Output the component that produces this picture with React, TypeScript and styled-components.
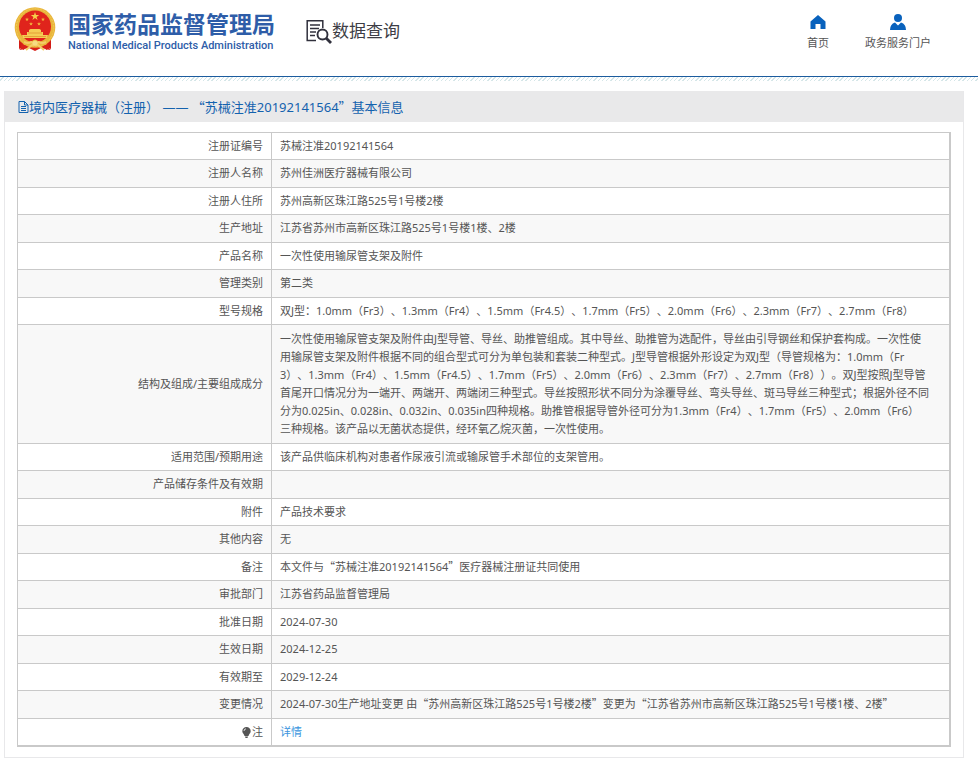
import React from "react";
import styled, { createGlobalStyle } from "styled-components";

const GlobalStyle = createGlobalStyle`
  *, *::before, *::after { box-sizing: border-box; }
  body {
    margin: 0;
    background: #fff;
    color: #555;
    font-family: "Noto Sans", "Noto Sans CJK SC", sans-serif;
    font-size: 11px;
    line-height: 18px;
    text-spacing-trim: space-all;
  }
`;

const Header = styled.header`
  display: flex;
  align-items: flex-start;
  justify-content: space-between;
  height: 77px;
  padding: 7px 47px 0 14px;
  border-bottom: 1px solid #1c5c9e;
`;

const Hatch = styled.div`
  height: 4px;
  background: repeating-linear-gradient(135deg, #fff 0 2px, #d5e6e8 2px 3px);
`;

const Brand = styled.div`
  display: flex;
  align-items: flex-start;
`;

const HomeLink = styled.a`
  display: flex;
  gap: 12px;
  color: #2e5da8;
  text-decoration: none;
`;

const BrandText = styled.span`
  display: flex;
  flex-direction: column;
  white-space: nowrap;
`;

const BrandName = styled.span`
  font-family: "Noto Sans CJK SC", sans-serif;
  font-size: 23px;
  font-weight: 700;
  line-height: 32px;
`;

const BrandEnglish = styled.span`
  font-family: Roboto, sans-serif;
  font-size: 11px;
  font-weight: 500;
  line-height: 14px;
`;

const Section = styled.h1`
  display: flex;
  align-items: flex-start;
  margin: 12px 0 0 31px;
  color: #3d3d45;
  font-family: "Noto Sans CJK SC", sans-serif;
  font-size: 17px;
  font-weight: 400;
  line-height: 22px;
  white-space: nowrap;
`;

const Nav = styled.nav`
  display: flex;
  gap: 36px;
  padding-top: 7px;
`;

const NavLink = styled.a`
  display: flex;
  flex-direction: column;
  align-items: center;
  gap: 4px;
  color: #555;
  text-decoration: none;
  white-space: nowrap;
`;

const Panel = styled.main`
  margin: 10px 14px 6px 4px;
  border: 1px solid #e8e8ea;
  border-top: 0;
`;

const PanelTitle = styled.h2`
  display: flex;
  align-items: center;
  height: 31px;
  margin: 0 0 10px;
  padding-left: 13px;
  background: #e9e9ea;
  color: #1462ae;
  font-size: 13px;
  font-weight: 400;
`;

const TableWrap = styled.div`
  padding: 0 12px 10px;
`;

const Table = styled.table`
  width: 100%;
  table-layout: fixed;
  border-collapse: separate;
  border-spacing: 0;
  border: 1px solid #c9c9c9;
  border-right-width: 2px;
`;

const Label = styled.th`
  width: 254px;
  padding: 4px 8px;
  border-right: 1px solid #c9c9c9;
  border-bottom: 1px solid #c9c9c9;
  font-weight: 400;
  text-align: right;
`;

const Value = styled.td<{ $long?: boolean }>`
  padding: ${(p) => (p.$long ? "5px 8px" : "4px 8px")};
  border-bottom: 1px solid #c9c9c9;
  white-space: ${(p) => (p.$long ? "pre-line" : "normal")};
`;

const Row = styled.tr`
  &:nth-child(even) {
    background: #f8f8f8;
  }
  &:nth-child(even) > * {
    padding-bottom: 5px;
  }
`;

const FullWidth = styled.span`
  font-family: "Noto Sans CJK SC", sans-serif;
  line-height: 1;
`;

const DetailLink = styled.a`
  color: #3a95de;
  text-decoration: none;
`;

const BulbIcon = styled.svg`
  vertical-align: -2px;
  margin-right: 1px;
`;

const Emblem = () => (
  <svg width="42" height="45" viewBox="0 0 42 45" aria-hidden="true">
    <path d="M5 31L8 33 12 37 10 43 6 41 5 43ZM37 31L34 33 30 37 32 43 36 41 37 43Z" fill="#d21b16" />
    <path d="M8 35H34L36 43 27 41 21 44 15 41 6 43Z" fill="#d9211a" />
    <circle cx="21" cy="20.500" r="20.300" fill="#e9b63b" />
    <circle cx="21" cy="20.500" r="18.700" fill="none" stroke="#f2c958" strokeWidth="1" strokeDasharray="2 1" />
    <circle cx="21" cy="19.500" r="16" fill="#e0241c" />
    <path d="M21 5l1 3h3.200l-2.600 2 1 3-2.600-1.900L18.400 13l1-3-2.600-2H20z" fill="#f6cf4a" />
    <path d="M13 10.500l.5 1.300h1.400l-1.100.9.400 1.300-1.200-.8-1.200.8.400-1.300-1.100-.9h1.400zM29 10.500l.5 1.300h1.400l-1.100.9.400 1.300-1.200-.8-1.200.8.400-1.300-1.100-.9h1.400zM17 15l.5 1.300h1.400l-1.100.9.400 1.300-1.200-.8-1.200.8.400-1.300-1.100-.9h1.400zM25 15l.5 1.300h1.400l-1.100.9.400 1.300-1.200-.8-1.200.8.400-1.300-1.100-.9h1.400z" fill="#f2b83e" />
    <path d="M15 23L16.500 22H25.500L27 23V25H29V28H34L33 31H9L8 28H13V25H15Z" fill="#f5cd55" />
    <path d="M14 26H28M10 29.500H32" stroke="#df8c2c" strokeWidth=".7" />
    <path d="M7 32Q13 36 18 34Q21 31 24 34Q29 36 35 32L32 38Q27 38 24 36H18Q15 38 10 38Z" fill="#e9b63b" />
    <path d="M10 35Q14 37 17 35L21 37 25 35Q28 37 32 35M12 43L18 38H24L30 43" fill="none" stroke="#f3cd68" strokeWidth="2" />
    <circle cx="21" cy="36" r="2.500" fill="#f7dc83" />
  </svg>
);

const SearchDocIcon = () => (
  <svg width="26" height="26" viewBox="0 0 26 26" fill="none" stroke="#30303c" aria-hidden="true">
    <path d="M10 21.500H1.200V1.800H16.800V9" strokeWidth="1.500" />
    <path d="M4 6H14M4 9.500H13M4 13H10M4 16.500H9" strokeWidth="1.300" />
    <circle cx="16.500" cy="15.500" r="5" strokeWidth="1.900" />
    <path d="M20 19L25 24" strokeWidth="2.800" />
  </svg>
);

const HomeIcon = () => (
  <svg width="16" height="16" viewBox="0 0 16 16" fill="#0962bd" aria-hidden="true">
    <path d="M8 1L15.500 7.500V15H10.500V10H5.500V15H.5V7.500Z" />
  </svg>
);

const UserIcon = () => (
  <svg width="16" height="16" viewBox="0 0 16 16" fill="#0962bd" aria-hidden="true">
    <circle cx="8" cy="4" r="4" />
    <path d="M5 8.500L8 11.500 11 8.500Q16 10 16 16H0Q0 10 5 8.500Z" />
  </svg>
);

const DocIcon = () => (
  <svg width="11" height="12" viewBox="0 0 11 12" fill="none" stroke="#1462ae" aria-hidden="true">
    <path d="M1 .5H6.500L10 4V11.500H1ZM6.500 .5V4H10M3 5.500H8M3 7.500H8M3 9.500H8" />
  </svg>
);

const Bulb = () => (
  <BulbIcon width="9" height="11" viewBox="0 0 9 11" aria-hidden="true">
    <path d="M4.500 0A4.200 4.200 0 0 1 8.700 4.200C8.700 6.300 6.500 7.300 6.500 9H2.500C2.500 7.300.3 6.300.3 4.200A4.200 4.200 0 0 1 4.500 0ZM3 9.500H6L5.500 11H3.500Z" fill="#555" />
    <path d="M2 4Q2 2 4 1.800" fill="none" stroke="#fff" strokeWidth=".8" />
  </BulbIcon>
);

// Curly quotes take the full-width forms of the Chinese font.
const ChineseText = ({ text }: { text: string }) => (
  <>
    {text.split(/([“”])/).map((part, i) =>
      i % 2 ? <FullWidth key={i}>{part}</FullWidth> : part
    )}
  </>
);

const structure = `一次性使用输尿管支架及附件由J型导管、导丝、助推管组成。其中导丝、助推管为选配件，导丝由引导钢丝和保护套构成。一次性使
用输尿管支架及附件根据不同的组合型式可分为单包装和套装二种型式。J型导管根据外形设定为双J型（导管规格为：1.0mm（Fr
3）、1.3mm（Fr4）、1.5mm（Fr4.5）、1.7mm（Fr5）、2.0mm（Fr6）、2.3mm（Fr7）、2.7mm（Fr8））。双J型按照J型导管
首尾开口情况分为一端开、两端开、两端闭三种型式。导丝按照形状不同分为涂覆导丝、弯头导丝、斑马导丝三种型式；根据外径不同
分为0.025in、0.028in、0.032in、0.035in四种规格。助推管根据导管外径可分为1.3mm（Fr4）、1.7mm（Fr5）、2.0mm（Fr6）
三种规格。该产品以无菌状态提供，经环氧乙烷灭菌，一次性使用。`;

const records: { label: string; value: string; long?: boolean }[] = [
  { label: "注册证编号", value: "苏械注准20192141564" },
  { label: "注册人名称", value: "苏州佳洲医疗器械有限公司" },
  { label: "注册人住所", value: "苏州高新区珠江路525号1号楼2楼" },
  { label: "生产地址", value: "江苏省苏州市高新区珠江路525号1号楼1楼、2楼" },
  { label: "产品名称", value: "一次性使用输尿管支架及附件" },
  { label: "管理类别", value: "第二类" },
  { label: "型号规格", value: "双J型：1.0mm（Fr3）、1.3mm（Fr4）、1.5mm（Fr4.5）、1.7mm（Fr5）、2.0mm（Fr6）、2.3mm（Fr7）、2.7mm（Fr8）" },
  { label: "结构及组成/主要组成成分", value: structure, long: true },
  { label: "适用范围/预期用途", value: "该产品供临床机构对患者作尿液引流或输尿管手术部位的支架管用。" },
  { label: "产品储存条件及有效期", value: "" },
  { label: "附件", value: "产品技术要求" },
  { label: "其他内容", value: "无" },
  { label: "备注", value: "本文件与“苏械注准20192141564”医疗器械注册证共同使用" },
  { label: "审批部门", value: "江苏省药品监督管理局" },
  { label: "批准日期", value: "2024-07-30" },
  { label: "生效日期", value: "2024-12-25" },
  { label: "有效期至", value: "2029-12-24" },
  { label: "变更情况", value: "2024-07-30生产地址变更 由“苏州高新区珠江路525号1号楼2楼”变更为“江苏省苏州市高新区珠江路525号1号楼1楼、2楼”" },
];

export default function App() {
  return (
    <>
      <GlobalStyle />
      <Header>
        <Brand>
          <HomeLink href="#">
            <Emblem />
            <BrandText>
              <BrandName>国家药品监督管理局</BrandName>
              <BrandEnglish>National Medical Products Administration</BrandEnglish>
            </BrandText>
          </HomeLink>
          <Section>
            <SearchDocIcon />
            数据查询
          </Section>
        </Brand>
        <Nav>
          <NavLink href="#">
            <HomeIcon />
            首页
          </NavLink>
          <NavLink href="#">
            <UserIcon />
            政务服务门户
          </NavLink>
        </Nav>
      </Header>
      <Hatch />
      <Panel>
        <PanelTitle>
          <DocIcon />
          <span>
            <ChineseText text="境内医疗器械（注册） —— “苏械注准20192141564”基本信息" />
          </span>
        </PanelTitle>
        <TableWrap>
          <Table>
            <tbody>
              {records.map((r) => (
                <Row key={r.label}>
                  <Label scope="row">{r.label}</Label>
                  <Value $long={r.long}>
                    <ChineseText text={r.value} />
                  </Value>
                </Row>
              ))}
              <Row>
                <Label scope="row">
                  <Bulb />注
                </Label>
                <Value>
                  <DetailLink href="#">详情</DetailLink>
                </Value>
              </Row>
            </tbody>
          </Table>
        </TableWrap>
      </Panel>
    </>
  );
}
